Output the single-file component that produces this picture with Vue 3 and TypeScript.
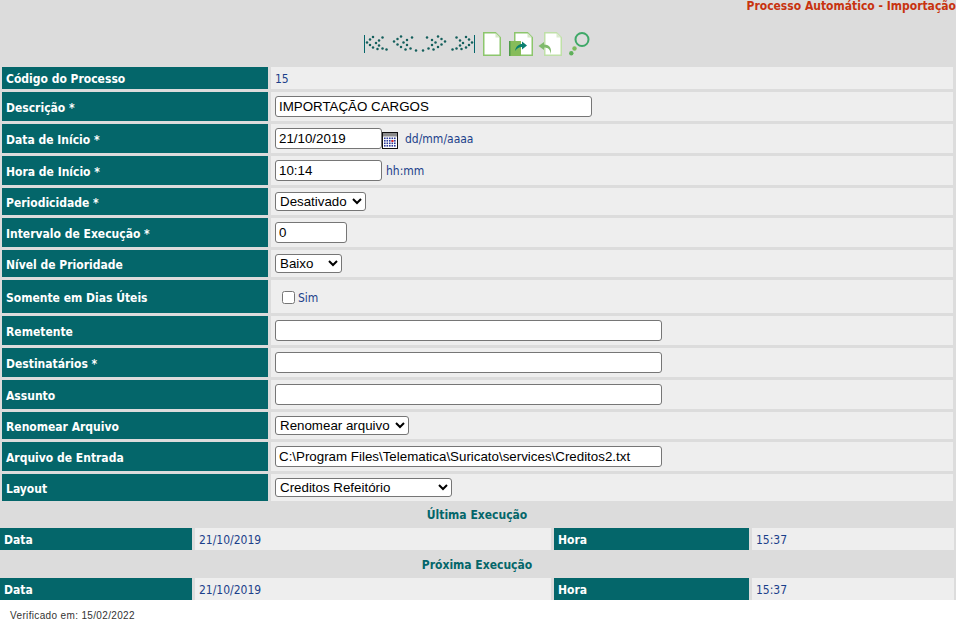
<script setup lang="ts">
interface Dot {
  x: number;
  y: number;
}

// pontos das setas de navegação, relativos ao canto do ícone
const firstDots: Dot[] = [
  { x: 3, y: 10 }, { x: 6, y: 7 }, { x: 9, y: 4.5 }, { x: 6, y: 12.5 }, { x: 9, y: 15 }, { x: 13.5, y: 16.5 },
  { x: 12, y: 10.5 }, { x: 15, y: 8 }, { x: 18.5, y: 5 }, { x: 15, y: 13 }, { x: 18.5, y: 16 }, { x: 22.5, y: 17 }
];
const prevDots: Dot[] = [
  { x: 2, y: 9 }, { x: 5.5, y: 6.5 }, { x: 9, y: 4 }, { x: 5.5, y: 12 }, { x: 9, y: 14.5 }, { x: 13.5, y: 17 },
  { x: 11.5, y: 10 }, { x: 15, y: 7.5 }, { x: 20, y: 5 }, { x: 15, y: 12.5 }, { x: 18.5, y: 16 }, { x: 24, y: 18 }
];
const nextDots = prevDots.map((d) => ({ x: 26 - d.x, y: d.y }));
const lastDots = firstDots.map((d) => ({ x: 26 - d.x, y: d.y }));

const calendarCols = [3, 5.5, 8, 10.5, 13];
const calendarRows = [6, 8.5, 11, 13.5];
</script>

<template>
  <div class="page">
    <header class="top">
      <h1 class="title">Processo Automático - Importação</h1>
      <div class="toolbar">
        <div class="nav">
          <svg width="26" height="24" viewBox="0 0 26 24">
            <rect x="0" y="2" width="1" height="18" fill="#04666a" />
            <circle v-for="(d, i) in firstDots" :key="i" :cx="d.x" :cy="d.y - 0.5" r="1.25" fill="#145f5c" />
          </svg>
          <svg width="26" height="24" viewBox="0 0 26 24">
            <circle v-for="(d, i) in prevDots" :key="i" :cx="d.x" :cy="d.y - 0.5" r="1.25" fill="#145f5c" />
          </svg>
          <svg class="third" width="26" height="24" viewBox="0 0 26 24">
            <circle v-for="(d, i) in nextDots" :key="i" :cx="d.x" :cy="d.y - 0.5" r="1.25" fill="#145f5c" />
          </svg>
          <svg width="26" height="24" viewBox="0 0 26 24">
            <circle v-for="(d, i) in lastDots" :key="i" :cx="d.x" :cy="d.y - 0.5" r="1.25" fill="#145f5c" />
            <rect x="25" y="2" width="1" height="18" fill="#04666a" />
          </svg>
        </div>
        <svg class="tool new" width="18" height="24" viewBox="0 0 18 24">
          <path d="M0.750 0.750H12.500L17.250 5.500V23.250H0.750Z" fill="#fff" stroke="#8cc66c" stroke-width="1.500" />
          <path d="M12.500 0.750V5.500H17.250Z" fill="#d6e8c8" />
        </svg>
        <svg class="tool save" width="24" height="24" viewBox="0 0 24 24">
          <path d="M5.750 0.750H18.500L23.250 5.500V23.250H5.750Z" fill="#fff" stroke="#8cc66c" stroke-width="1.500" />
          <path d="M18.500 0.750V5.500H23.250Z" fill="#d6e8c8" />
          <rect x="0" y="9" width="12" height="15" fill="#86bc5a" />
          <rect x="0" y="9" width="1.500" height="15" fill="#4f9a4a" />
          <path d="M6 19C7 14 10 12 13 12V9.500L18 13.500L13 17.500V15C10 15 8 16.500 6 19Z" fill="#0a7f6f" />
        </svg>
        <svg class="tool back" width="24" height="24" viewBox="0 0 24 24">
          <path d="M6.750 0.750H18.500L23.250 5.500V23.250H6.750Z" fill="#fff" stroke="#bfe0a8" stroke-width="1.500" />
          <path d="M18.500 0.750V5.500H23.250Z" fill="#dcebd0" />
          <path d="M12.500 22C12.500 17.500 10 15.500 6 15.500V18L0.500 14L6 10V12.500C10.500 12.500 14.500 15.500 12.500 22Z" fill="#7fba6b" />
        </svg>
        <svg class="tool find" width="21" height="24" viewBox="0 0 21 24">
          <circle cx="13" cy="7.500" r="6.500" fill="none" stroke="#3fa868" stroke-width="2" />
          <circle cx="5.500" cy="16.500" r="2.200" fill="#7dbb5f" />
          <circle cx="2.300" cy="21.300" r="2.200" fill="#5fb05a" />
        </svg>
      </div>
    </header>

    <form class="form" @submit.prevent>
      <div class="label short">Código do Processo</div>
      <div class="value short"><span class="text">15</span></div>

      <div class="label">Descrição *</div>
      <div class="value"><input class="field w-desc" type="text" value="IMPORTAÇÃO CARGOS" /></div>

      <div class="label">Data de Início *</div>
      <div class="value">
        <input class="field w-date" type="text" value="21/10/2019" />
        <svg class="calendar" width="16" height="17" viewBox="0 0 16 17">
          <rect x="0.500" y="0.500" width="15" height="16" fill="#fff" stroke="#111" />
          <rect x="1" y="1" width="14" height="3.500" fill="#8a8a8a" />
          <g v-for="r in calendarRows" :key="r">
            <rect v-for="c in calendarCols" :key="c" :x="c - 1" :y="r - 0.500" width="1.600" height="1.600" fill="#2a3a9a" />
          </g>
          <rect x="9.500" y="8" width="2" height="2" fill="#e02020" />
        </svg>
        <span class="text hint-date">dd/mm/aaaa</span>
      </div>

      <div class="label">Hora de Início *</div>
      <div class="value">
        <input class="field w-date" type="text" value="10:14" />
        <span class="text hint-time">hh:mm</span>
      </div>

      <div class="label">Periodicidade *</div>
      <div class="value">
        <select class="field-select w-period"><option>Desativado</option></select>
      </div>

      <div class="label">Intervalo de Execução *</div>
      <div class="value"><input class="field w-interval" type="text" value="0" /></div>

      <div class="label">Nível de Prioridade</div>
      <div class="value">
        <select class="field-select w-priority"><option>Baixo</option></select>
      </div>

      <div class="label tall">Somente em Dias Úteis</div>
      <div class="value tall">
        <input id="uteis" class="check" type="checkbox" />
        <label class="text sim" for="uteis">Sim</label>
      </div>

      <div class="label">Remetente</div>
      <div class="value"><input class="field w-long" type="text" /></div>

      <div class="label">Destinatários *</div>
      <div class="value"><input class="field w-long" type="text" /></div>

      <div class="label">Assunto</div>
      <div class="value"><input class="field w-long" type="text" /></div>

      <div class="label">Renomear Arquivo</div>
      <div class="value">
        <select class="field-select w-rename"><option>Renomear arquivo</option></select>
      </div>

      <div class="label">Arquivo de Entrada</div>
      <div class="value">
        <input class="field w-long" type="text" value="C:\Program Files\Telematica\Suricato\services\Creditos2.txt" />
      </div>

      <div class="label">Layout</div>
      <div class="value">
        <select class="field-select w-layout"><option>Creditos Refeitório</option></select>
      </div>
    </form>

    <section class="runs">
      <h2 class="heading first">Última Execução</h2>
      <div class="label short run">Data</div>
      <div class="value short run"><span class="text">21/10/2019</span></div>
      <div class="label short run">Hora</div>
      <div class="value short run"><span class="text">15:37</span></div>

      <h2 class="heading second">Próxima Execução</h2>
      <div class="label short run">Data</div>
      <div class="value short run"><span class="text">21/10/2019</span></div>
      <div class="label short run">Hora</div>
      <div class="value short run"><span class="text">15:37</span></div>
    </section>
  </div>
  <footer class="footer">Verificado em: 15/02/2022</footer>
</template>

<style>
html,
body {
  background: #fff;
}
</style>

<style scoped>
.page {
  width: 956px;
  height: 600px;
  background: #dcdcdc;
  font-family: "DejaVu Sans Condensed", "DejaVu Sans", sans-serif;
  overflow: hidden;
}

.top {
  height: 67px;
}

.title {
  margin: 0;
  height: 30px;
  font-size: 12px;
  line-height: 12px;
  font-weight: 700;
  color: #c8330f;
  text-align: right;
  white-space: nowrap;
}

.toolbar {
  display: flex;
  align-items: flex-start;
  justify-content: center;
  padding-right: 2px;
}

.nav {
  display: flex;
  gap: 2px;
  margin-top: 3px;
  margin-right: 8px;
}

.nav .third {
  margin-left: 1px;
}

.tool {
  display: block;
  margin-top: 2px;
}

.save {
  margin-left: 8px;
}

.back {
  margin-left: 5px;
}

.find {
  margin-left: 7px;
}

.form {
  display: grid;
  grid-template-columns: 266px 682px;
  gap: 3px;
  padding-left: 2px;
}

.label {
  box-sizing: border-box;
  display: flex;
  align-items: center;
  min-height: 22px;
  padding-left: 4px;
  padding-top: 2px;
  background: #04666a;
  color: #fff;
  font-size: 12px;
  font-weight: 700;
}

.label.short {
  padding-top: 1px;
}

.value {
  box-sizing: border-box;
  display: flex;
  align-items: center;
  padding: 4px;
  background: #eeeeee;
}

.short {
  min-height: 22px;
  padding-top: 1px;
  padding-bottom: 0;
}

.tall {
  min-height: 33px;
}

.text {
  font-size: 12px;
  color: #1b3f8a;
}

.field {
  box-sizing: border-box;
  height: 21px;
  padding: 1px 4px 1px 3px;
  border: 1px solid #767676;
  border-radius: 3px;
  background: #fff;
  color: #000;
  font-family: "Liberation Sans", Arial, sans-serif;
  font-size: 13.333px;
}

.field-select {
  box-sizing: border-box;
  height: 19px;
  padding: 0;
  border: 1px solid #767676;
  border-radius: 3px;
  background: #fff;
  color: #000;
  font-family: "Liberation Sans", Arial, sans-serif;
  font-size: 13.333px;
}

.w-desc { width: 317px; }
.w-date { width: 107px; }
.w-interval { width: 72px; }
.w-long { width: 387px; }
.w-period { width: 91px; }
.w-priority { width: 67px; }
.w-rename { width: 134px; }
.w-layout { width: 177px; }

.calendar {
  display: block;
  margin-top: 4px;
}

.hint-date {
  margin-left: 7px;
}

.hint-time {
  margin-left: 4px;
}

.check {
  width: 13px;
  height: 13px;
  margin: 2px 3px 0 7px;
}

.sim {
  margin-top: 3px;
}

.runs {
  display: grid;
  grid-template-columns: 192px 356px 195px 202px;
  column-gap: 3px;
}

.heading {
  grid-column: 1 / -1;
  margin: 0;
  font-size: 12px;
  font-weight: 700;
  color: #04666a;
  text-align: center;
}

.heading.first {
  height: 27px;
  line-height: 29px;
}

.heading.second {
  height: 28px;
  line-height: 30px;
}

.run {
  min-height: 22px;
  height: 22px;
}

.footer {
  padding: 10px 0 0 10px;
  font-family: "Liberation Sans", Arial, sans-serif;
  font-size: 10px;
  letter-spacing: 0.35px;
  color: #333;
}
</style>
